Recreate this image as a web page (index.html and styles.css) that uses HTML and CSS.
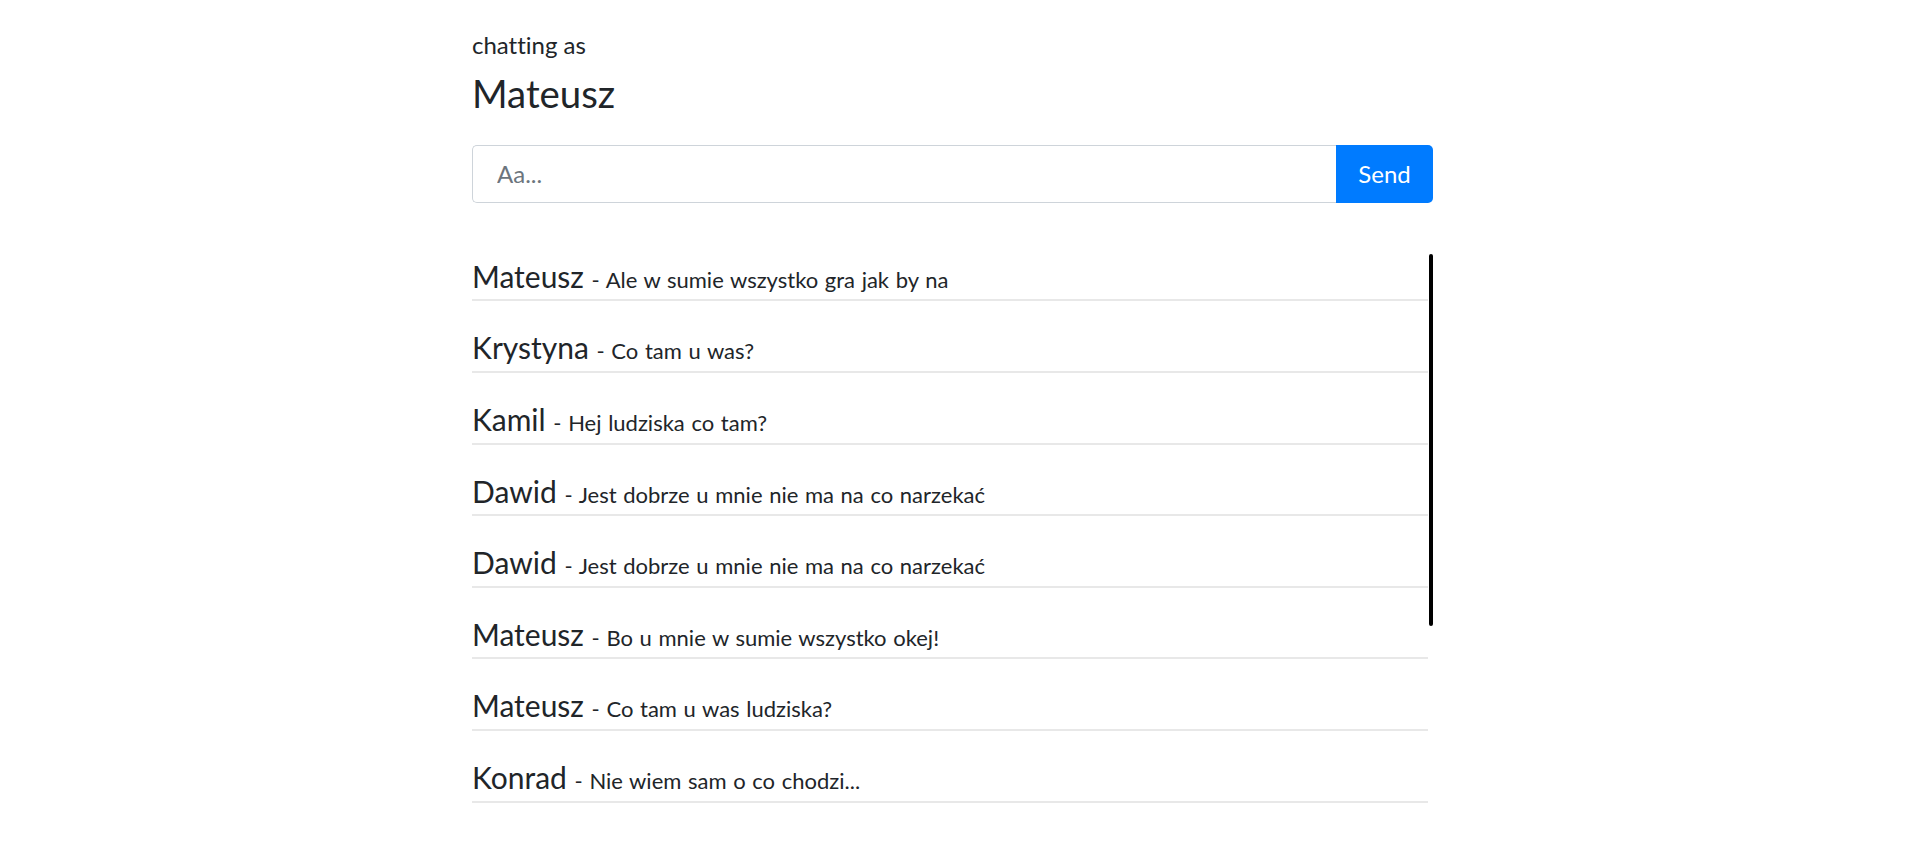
FILE: index.html
```html
<!DOCTYPE html>
<html lang="pl">
<head>
<meta charset="utf-8">
<title>Chat</title>
<link rel="stylesheet" href="styles.css">
</head>
<body>
<div class="page">
  <main class="chat">
    <header class="who">
      <p class="who-label">chatting as</p>
      <h2 class="who-name">Mateusz</h2>
    </header>
    <form class="composer">
      <input class="composer-input" type="text" placeholder="Aa...">
      <button class="composer-send" type="button">Send</button>
    </form>
    <div class="messages-frame">
      <ul class="messages">
        <li class="message"><span class="message-author">Mateusz</span> <span class="message-text">- Ale w sumie wszystko gra jak by na</span></li>
        <li class="message"><span class="message-author">Krystyna</span> <span class="message-text">- Co tam u was?</span></li>
        <li class="message"><span class="message-author">Kamil</span> <span class="message-text">- Hej ludziska co tam?</span></li>
        <li class="message"><span class="message-author">Dawid</span> <span class="message-text">- Jest dobrze u mnie nie ma na co narzekać</span></li>
        <li class="message"><span class="message-author">Dawid</span> <span class="message-text">- Jest dobrze u mnie nie ma na co narzekać</span></li>
        <li class="message"><span class="message-author">Mateusz</span> <span class="message-text">- Bo u mnie w sumie wszystko okej!</span></li>
        <li class="message"><span class="message-author">Mateusz</span> <span class="message-text">- Co tam u was ludziska?</span></li>
        <li class="message"><span class="message-author">Konrad</span> <span class="message-text">- Nie wiem sam o co chodzi...</span></li>
      </ul>
      <div class="scrollbar"><div class="scrollbar-thumb"></div></div>
    </div>
  </main>
</div>
</body>
</html>
```

FILE: styles.css
```css
* {
  box-sizing: border-box;
}

html, body {
  margin: 0;
  padding: 0;
  background: #ffffff;
}

body {
  font-family: "Lato", "Noto Sans", sans-serif;
  font-variant-ligatures: none;
  color: #212529;
  overflow: hidden;
}

.page {
  display: flex;
  justify-content: center;
  padding-right: 8px;
}

.chat {
  width: 961px;
  padding-top: 31px;
}

.who-label {
  margin: 0;
  font-size: 24px;
  line-height: 28.8px;
  font-weight: 400;
}

.who-name {
  margin: 10px 0 0;
  font-size: 38.4px;
  line-height: 46px;
  font-weight: 400;
}

.composer {
  display: flex;
  margin: 29px 0 0;
  height: 58px;
}

.composer-input {
  flex: 1 1 auto;
  min-width: 0;
  height: 58px;
  border: 1px solid #ced4da;
  border-right: none;
  border-radius: 5px 0 0 5px;
  padding: 0 24px;
  font-family: inherit;
  font-size: 24px;
  color: #495057;
  background: #fff;
  outline: none;
}

.composer-input::placeholder {
  color: #6c757d;
}

.composer-send {
  flex: 0 0 97px;
  height: 58px;
  border: none;
  border-radius: 0 5px 5px 0;
  background: #007bff;
  color: #ffffff;
  font-family: inherit;
  font-size: 24px;
  padding: 0;
}

.messages-frame {
  display: flex;
  margin-top: 27px;
  height: 600px;
}

.messages {
  flex: 1 1 auto;
  min-width: 0;
  list-style: none;
  margin: 0;
  padding: 0;
  overflow: hidden;
}

.scrollbar {
  flex: 0 0 5px;
  padding: 24px 0 0 1px;
}

.scrollbar-thumb {
  width: 4px;
  height: 372px;
  background: #000000;
  border-radius: 2px;
}

.message {
  padding: 28px 0 5.6px;
  border-bottom: 2px solid #e8e8e8;
  font-size: 30px;
  line-height: 36px;
  white-space: nowrap;
}

.message-text {
  font-size: 22px;
  line-height: 1;
  word-spacing: 1px;
}
```
